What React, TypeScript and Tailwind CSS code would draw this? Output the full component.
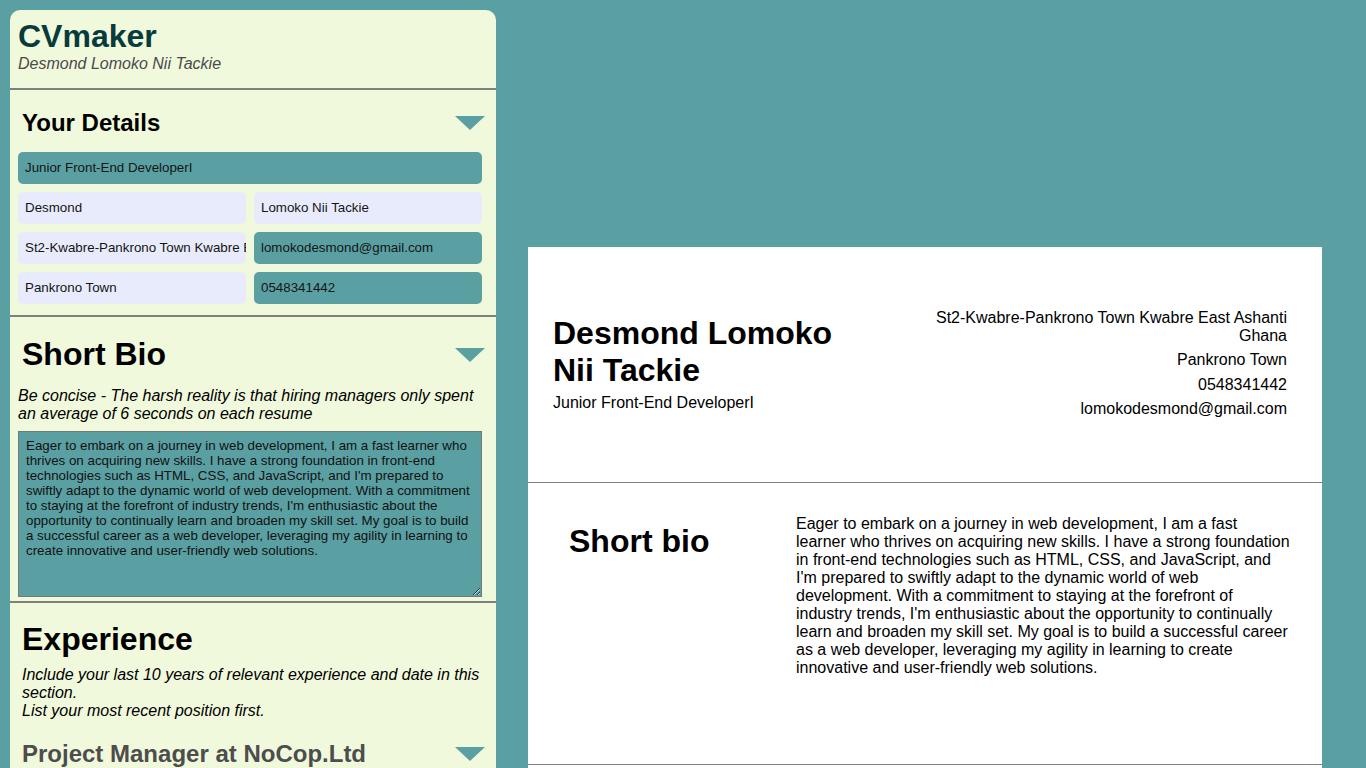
import React from "react";

const TEAL = "bg-[#5a9fa2]";

function Tri() {
  return (
    <svg width="30" height="14" viewBox="0 0 30 14" className="shrink-0 mr-[3px]">
      <polygon points="0,0 30,0 15,14" fill="#5a9fa2" />
    </svg>
  );
}

function Field({ value, blue, span }: { value: string; blue?: boolean; span?: boolean }) {
  return (
    <input
      readOnly
      defaultValue={value}
      className={`h-[32px] w-full rounded-[5px] pl-[7px] pr-0 pb-[2px] text-[13.33px] text-[#151515] outline-none ${
        blue ? "bg-[#5a9fa2]" : "bg-[#e8ebfc]"
      } ${span ? "col-span-2" : ""}`}
    />
  );
}

const BIO =
  "Eager to embark on a journey in web development, I am a fast learner who thrives on acquiring new skills. I have a strong foundation in front-end technologies such as HTML, CSS, and JavaScript, and I'm prepared to swiftly adapt to the dynamic world of web development. With a commitment to staying at the forefront of industry trends, I'm enthusiastic about the opportunity to continually learn and broaden my skill set. My goal is to build a successful career as a web developer, leveraging my agility in learning to create innovative and user-friendly web solutions.";

export default function App() {
  return (
    <div
      className={`min-h-screen ${TEAL} p-[10px] flex items-start text-black`}
      style={{ fontFamily: "'Liberation Sans', Arial, sans-serif" }}
    >
      <aside className="w-[486px] shrink-0 bg-[#f1f9dc] rounded-[10px] min-h-[2210px]">
        <header className="px-2 pt-2 pb-[15px] border-b-2 border-[#808080]">
          <h1 className="text-[32px] font-bold leading-[37px] text-[#083c3c]">CVmaker</h1>
          <p className="italic text-[16px] leading-[18px] text-[#4a4a4a]">Desmond Lomoko Nii Tackie</p>
        </header>

        <section className="px-2 pt-[19px] pb-[11px] border-b-2 border-[#808080]">
          <div className="flex items-center justify-between">
            <h2 className="pl-1 text-[24px] font-bold leading-[28px]">Your Details</h2>
            <Tri />
          </div>
          <div className="mt-[15px] mr-[6px] grid grid-cols-2 gap-2">
            <Field value="Junior Front-End DeveloperI" blue span />
            <Field value="Desmond" />
            <Field value="Lomoko Nii Tackie" />
            <Field value="St2-Kwabre-Pankrono Town Kwabre East Ashanti Ghana" />
            <Field value="lomokodesmond@gmail.com" blue />
            <Field value="Pankrono Town" />
            <Field value="0548341442" blue />
          </div>
        </section>

        <section className="px-2 pt-[19px] pb-[4px] border-b-2 border-[#808080]">
          <div className="flex items-center justify-between">
            <h2 className="pl-1 text-[32px] font-bold leading-[37px]">Short Bio</h2>
            <Tri />
          </div>
          <p className="mt-[13.5px] mr-[6px] italic text-[16px] leading-[18px]">
            Be concise - The harsh reality is that hiring managers only spent an average of 6 seconds on each resume
          </p>
          <textarea
            readOnly
            defaultValue={BIO}
            className="mt-[8px] block w-[464px] h-[166px] border border-[#777] bg-[#5a9fa2] px-[7px] py-[6px] text-[13.33px] leading-[15px] text-[#111] outline-none"
          />
        </section>

        <section className="px-2 pt-[18.5px] pb-6">
          <h2 className="pl-1 text-[32px] font-bold leading-[37px]">Experience</h2>
          <p className="mt-[7.5px] pl-1 italic text-[16px] leading-[18px]">
            Include your last 10 years of relevant experience and date in this section.
            <br />
            List your most recent position first.
          </p>
          <div className="mt-[20px] flex items-center justify-between">
            <h3 className="pl-1 text-[24px] font-bold leading-[28px] text-[#4d4d4d]">Project Manager at NoCop.Ltd</h3>
            <Tri />
          </div>
          <div className="mt-4 mr-[6px] grid grid-cols-2 gap-2">
            <Field value="Project Manager" span />
            <Field value="NoCop.Ltd" />
            <Field value="Kumasi" />
            <Field value="2021" />
            <Field value="Present" />
          </div>
        </section>
      </aside>

      <main className="ml-[32px] mt-[237px] w-[794px] shrink-0 bg-white min-h-[1123px]">
        <div className="h-[236px] flex justify-between items-start pl-[25px] pr-[35px] border-b border-[#808080]">
          <div className="w-[300px] mt-[67.5px]">
            <h1 className="text-[32px] font-bold leading-[37px]">Desmond Lomoko Nii Tackie</h1>
            <p className="mt-[5.5px] text-[16px] leading-[18px]">Junior Front-End DeveloperI</p>
          </div>
          <div className="w-[360px] mt-[61.5px] text-right text-[16px] leading-[18px] flex flex-col gap-[6.5px]">
            <p>St2-Kwabre-Pankrono Town Kwabre East Ashanti Ghana</p>
            <p>Pankrono Town</p>
            <p>0548341442</p>
            <p>lomokodesmond@gmail.com</p>
          </div>
        </div>
        <div className="flex min-h-[282px] border-b border-[#808080]">
          <div className="w-[268px] shrink-0 pl-[41px] pt-[39.5px]">
            <h2 className="text-[32px] font-bold leading-[37px]">Short bio</h2>
          </div>
          <p className="w-[494.5px] pt-[31.5px] text-[16px] leading-[18px]">{BIO}</p>
        </div>
        <div className="flex min-h-[282px]">
          <div className="w-[268px] shrink-0 pl-[41px] pt-[39.5px]">
            <h2 className="text-[32px] font-bold leading-[37px]">Experience</h2>
          </div>
          <div className="w-[494.5px] pt-[31px] text-[16px] leading-[18px]">
            <p className="font-bold">Project Manager at NoCop.Ltd</p>
            <p>2021 - Present</p>
          </div>
        </div>
      </main>
    </div>
  );
}
